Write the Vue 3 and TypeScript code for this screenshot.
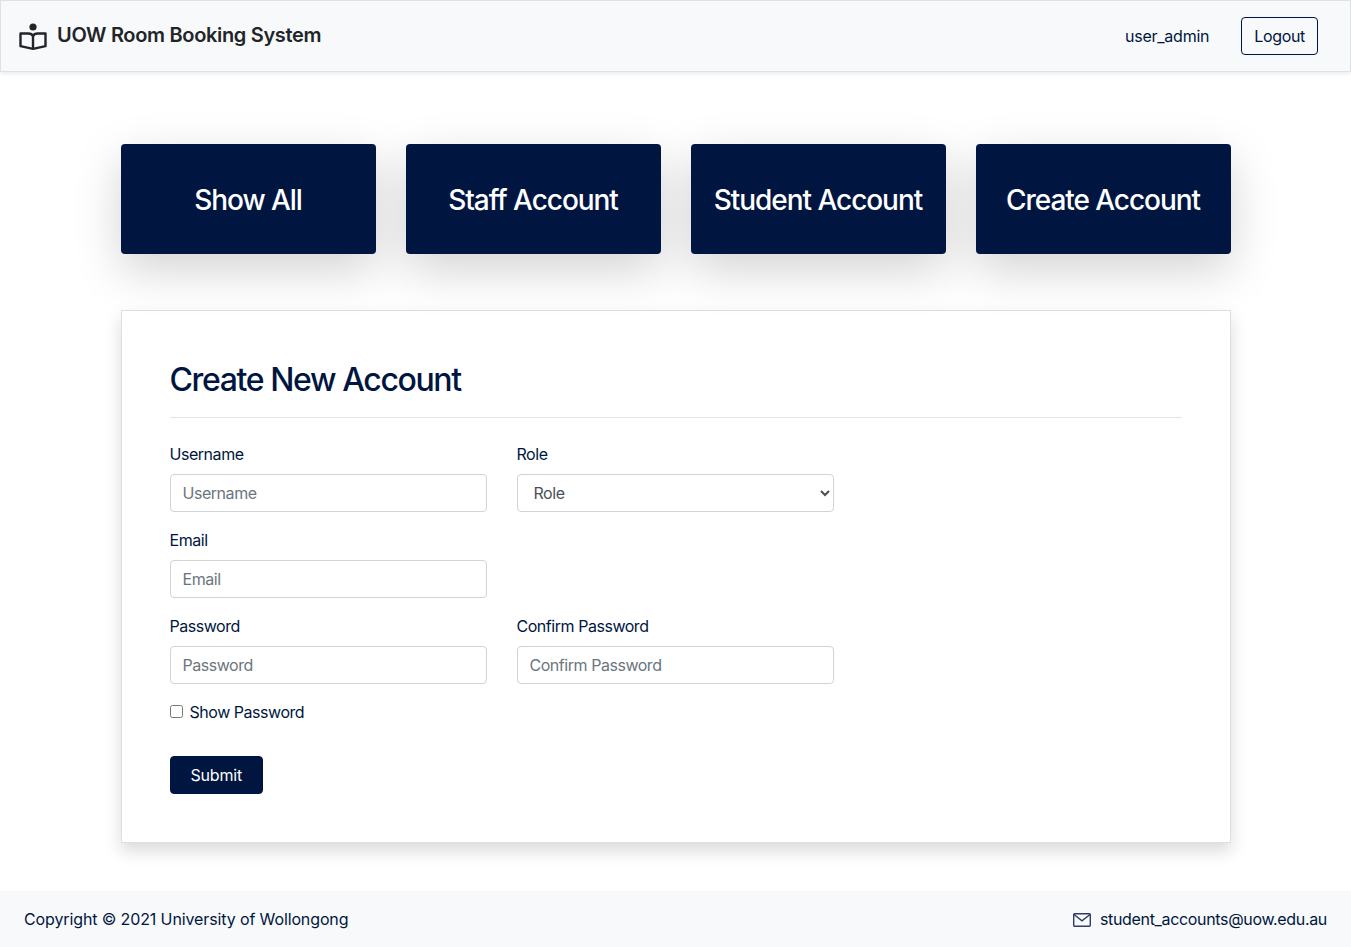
<script setup lang="ts">
import { ref } from 'vue'

const tabs = ['Show All', 'Staff Account', 'Student Account', 'Create Account']

const username = ref('')
const email = ref('')
const role = ref('')
const password = ref('')
const confirmPassword = ref('')
const showPassword = ref(false)
</script>

<template>
  <div class="page">
    <nav class="navbar">
      <a class="brand" href="#">
        <svg class="brand-icon" viewBox="0 0 28 28" width="28" height="28" fill="none">
          <circle cx="14" cy="5" r="3.6" fill="#212529" />
          <path d="M1.5 11.5H9.5C11.8 11.5 13.2 12.4 14 14C14.8 12.4 16.2 11.5 18.5 11.5H26.5V24.2L14 26.8L1.5 24.2Z" stroke="#212529" stroke-width="2.4" stroke-linejoin="round" />
          <path d="M14 14V26" stroke="#212529" stroke-width="2.4" />
        </svg>
        <span class="brand-text">UOW Room Booking System</span>
      </a>
      <div class="nav-right">
        <span class="nav-user">user_admin</span>
        <button class="btn btn-outline" type="button">Logout</button>
      </div>
    </nav>

    <main class="container">
      <div class="tabs">
        <button v-for="tab in tabs" :key="tab" class="tab" type="button">{{ tab }}</button>
      </div>

      <section class="card">
        <h2 class="card-title">Create New Account</h2>
        <hr class="divider" />
        <form class="form" @submit.prevent>
          <div class="field">
            <label for="username">Username</label>
            <input id="username" v-model="username" type="text" placeholder="Username" />
          </div>
          <div class="field">
            <label for="role">Role</label>
            <select id="role" v-model="role">
              <option value="">Role</option>
              <option value="staff">Staff</option>
              <option value="student">Student</option>
            </select>
          </div>
          <div class="field field-first">
            <label for="email">Email</label>
            <input id="email" v-model="email" type="email" placeholder="Email" />
          </div>
          <div class="field field-first">
            <label for="password">Password</label>
            <input id="password" v-model="password" :type="showPassword ? 'text' : 'password'" placeholder="Password" />
          </div>
          <div class="field">
            <label for="confirm">Confirm Password</label>
            <input id="confirm" v-model="confirmPassword" :type="showPassword ? 'text' : 'password'" placeholder="Confirm Password" />
          </div>
          <label class="check">
            <input v-model="showPassword" type="checkbox" />
            <span>Show Password</span>
          </label>
          <div class="actions">
            <button class="btn btn-primary" type="submit">Submit</button>
          </div>
        </form>
      </section>
    </main>

    <footer class="footer">
      <span class="copyright">Copyright © 2021 University of Wollongong</span>
      <span class="footer-mail">
        <svg class="mail-icon" viewBox="0 0 18 14" width="18" height="14" fill="none">
          <rect x="0.7" y="0.7" width="16.6" height="12.6" rx="1" stroke="#2c3e66" stroke-width="1.4" />
          <path d="M1 1.5L9 7.8L17 1.5" stroke="#2c3e66" stroke-width="1.4" />
        </svg>
        <span>student_accounts@uow.edu.au</span>
      </span>
    </footer>
  </div>
</template>

<style>
html,
body {
  margin: 0;
  background: #fff;
}
</style>

<style scoped>
.page {
  min-height: 947px;
  display: flex;
  flex-direction: column;
  box-sizing: border-box;
  font-family: Inter, 'Liberation Sans', sans-serif;
  font-size: 16px;
  line-height: 24px;
  letter-spacing: -0.33px;
  color: #001641;
}

.navbar {
  height: 72px;
  box-sizing: border-box;
  display: flex;
  align-items: center;
  justify-content: space-between;
  padding: 0 32px 0 18px;
  background: #f8f9fa;
  border: 1px solid #dee2e6;
  box-shadow: 0 2px 4px rgba(0, 0, 0, 0.075);
}

.brand {
  display: flex;
  align-items: center;
  gap: 10px;
  color: #212529;
  font-size: 20px;
  font-weight: 600;
  letter-spacing: -0.33px;
  text-decoration: none;
}

.brand-text {
  margin-top: -2px;
}

.nav-right {
  display: flex;
  align-items: center;
  gap: 32px;
}

.nav-user {
  letter-spacing: -0.25px;
}

.btn {
  height: 38px;
  box-sizing: border-box;
  padding: 0 12px;
  border-radius: 4px;
  font: inherit;
  letter-spacing: inherit;
  cursor: pointer;
}

.btn-outline {
  color: #001641;
  background: transparent;
  border: 1px solid #001641;
}

.btn-primary {
  padding: 0 20px;
  color: #fff;
  background: #001641;
  border: 1px solid #001641;
  font-weight: 400;
  letter-spacing: -0.2px;
}

.container {
  width: 1110px;
  margin: 0 auto;
  padding: 72px 0 48px;
}

.tabs {
  display: grid;
  grid-template-columns: repeat(4, 1fr);
  gap: 30px;
}

.tab {
  height: 110px;
  padding: 2px 0 0;
  border: 0;
  border-radius: 4px;
  background: #001641;
  color: #fff;
  font-family: inherit;
  font-size: 28px;
  font-weight: 500;
  letter-spacing: -1.05px;
  cursor: pointer;
  box-shadow: 0 16px 48px rgba(0, 0, 0, 0.175);
}

.card {
  margin-top: 56px;
  padding: 48px;
  background: #fff;
  border: 1px solid rgba(0, 0, 0, 0.125);
  box-shadow: 0 8px 16px rgba(0, 0, 0, 0.15);
}

.card-title {
  margin: 2px 0 0;
  font-size: 32px;
  line-height: 38.4px;
  font-weight: 500;
  letter-spacing: -1.38px;
}

.divider {
  height: 1px;
  margin: 18px 0 24px;
  border: 0;
  background: #e3e4e7;
}

.form {
  display: grid;
  grid-template-columns: repeat(3, 317px);
  column-gap: 30px;
  letter-spacing: -0.46px;
}

.field {
  display: flex;
  flex-direction: column;
  margin-bottom: 16px;
}

.field-first {
  grid-column: 1;
}

.field label {
  margin-bottom: 8px;
}

.field input,
.field select {
  width: 100%;
  height: 38px;
  box-sizing: border-box;
  padding: 0 12px;
  border: 1px solid #ced4da;
  border-radius: 4px;
  background: #fff;
  color: #495057;
  font: inherit;
  letter-spacing: inherit;
}

.field input::placeholder {
  color: #6c757d;
  opacity: 1;
}

.check {
  grid-column: 1 / -1;
  display: flex;
  align-items: center;
  gap: 7px;
  height: 24px;
}

.check input {
  width: 13px;
  height: 13px;
  margin: -2px 0 0;
}

.actions {
  grid-column: 1 / -1;
  margin-top: 32px;
}

.footer {
  margin-top: auto;
  height: 56px;
  display: flex;
  align-items: center;
  justify-content: space-between;
  padding: 0 24px;
  background: #f8f9fa;
}

.copyright {
  letter-spacing: -0.12px;
}

.footer-mail {
  display: flex;
  align-items: center;
  gap: 9px;
}

.mail-icon {
  margin-top: 1px;
}
</style>
